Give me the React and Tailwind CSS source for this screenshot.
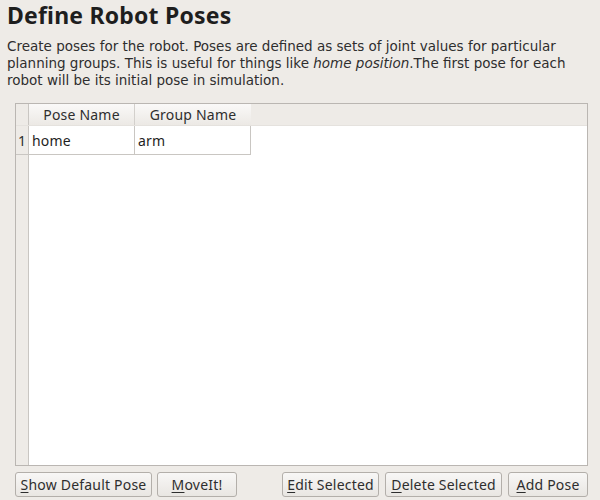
import React from "react";

const U = ({ children }) => <span className="underline underline-offset-2">{children}</span>;

function Btn({ className = "", children }) {
  return (
    <button className={"shrink-0 h-[25px] rounded-[3px] border border-[#b3afaa] bg-gradient-to-b from-[#f8f7f6] to-[#e9e6e2] text-[14px] tracking-[0.2px] text-[#2e2e2e] flex items-center justify-center " + className}>
      {children}
    </button>
  );
}

export default function App() {
  return (
    <div className="w-[600px] h-[500px] bg-[#eeebe7] text-[#3c3c3c] overflow-hidden flex flex-col" style={{ fontFamily: '"Noto Sans", "Open Sans", sans-serif' }}>
      <h1 className="pl-[7px] pt-[0px] text-[23px] tracking-[0.2px] font-bold leading-[30px] text-[#1e1e1e]">Define Robot Poses</h1>
      <p className="pl-[7px] mt-[8px] text-[13.5px] leading-[17px] text-[#2e2e2e] whitespace-nowrap" style={{ fontFamily: '"DejaVu Sans", sans-serif' }}>
        Create poses for the robot. Poses are defined as sets of joint values for particular<br />
        planning groups. This is useful for things like <i>home position</i>.The first pose for each<br />
        robot will be its initial pose in simulation.
      </p>
      <div className="ml-[15px] mr-[12px] mt-[14px] h-[363px] border border-[#bab6b2] flex flex-col bg-white">
        <div className="flex h-[22px] bg-[#eeebe7] border-b border-[#e5e2de] text-[14px] tracking-[0.2px] text-[#2e2e2e]">
          <div className="w-[13px] border-r border-[#c9c6c2]" />
          <div className="w-[106px] flex items-center justify-center bg-gradient-to-b from-[#faf9f8] to-[#ece9e5] border-r border-[#d3d0cc]">Pose Name</div>
          <div className="w-[116px] flex items-center justify-center bg-gradient-to-b from-[#faf9f8] to-[#ece9e5]">Group Name</div>
        </div>
        <div className="flex-1 flex">
          <div className="w-[13px] bg-[#eeebe7] border-r border-[#c9c6c2] flex flex-col">
            <div className="h-[29px] border-b border-[#c9c6c2] flex items-center justify-center text-[14px] text-[#2e2e2e]">1</div>
          </div>
          <div className="flex flex-col">
            <div className="flex h-[29px] text-[14px] tracking-[0.2px] text-[#1e1e1e]">
              <div className="w-[106px] border-r border-b border-[#c9c6c2] flex items-center pl-[3px]">home</div>
              <div className="w-[116px] border-r border-b border-[#c9c6c2] flex items-center pl-[3px]">arm</div>
            </div>
          </div>
        </div>
      </div>
      <div className="flex ml-[15px] mr-[12px] mt-[6px]">
        <Btn className="w-[137px]"><U>S</U>how Default Pose</Btn>
        <Btn className="w-[80px] ml-[5px]"><U>M</U>oveIt!</Btn>
        <Btn className="w-[97px] ml-[45px]"><U>E</U>dit Selected</Btn>
        <Btn className="w-[117px] ml-[6px]"><U>D</U>elete Selected</Btn>
        <Btn className="w-[80px] ml-[6px]"><U>A</U>dd Pose</Btn>
      </div>
    </div>
  );
}
